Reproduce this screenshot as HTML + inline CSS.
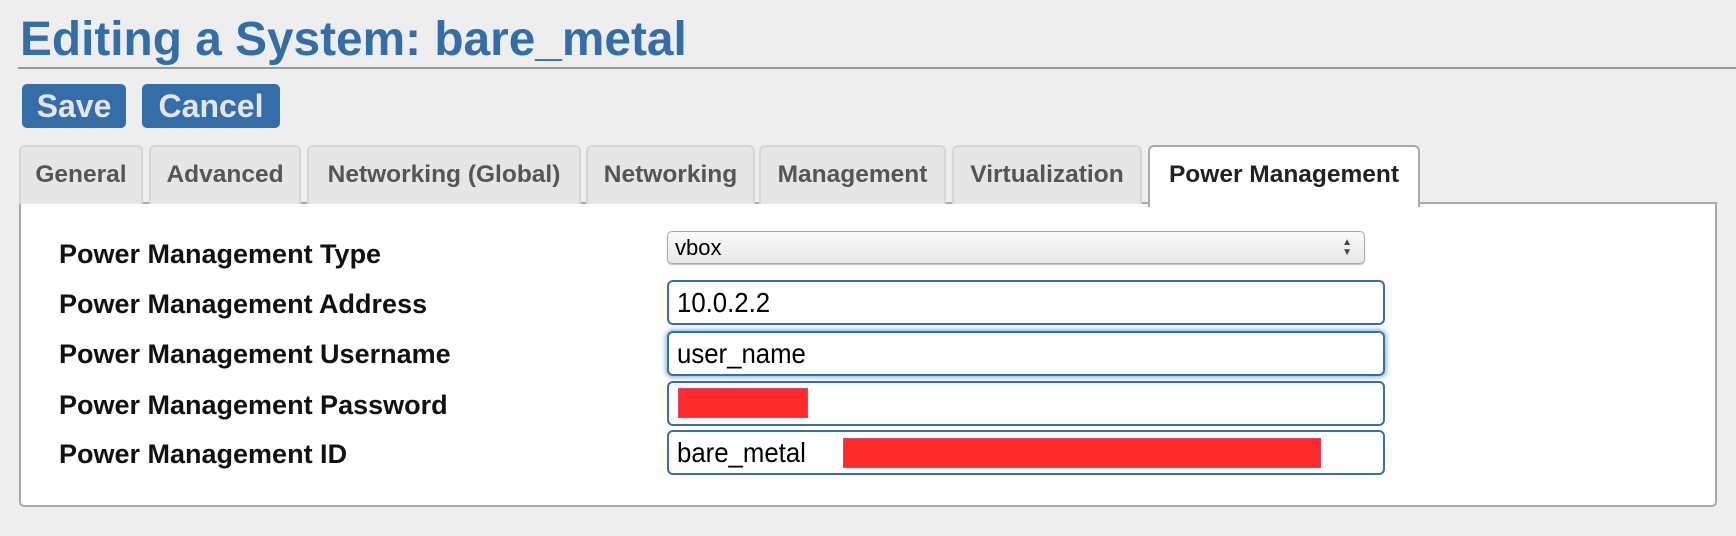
<!DOCTYPE html>
<html><head><meta charset="utf-8"><style>
*{box-sizing:border-box;margin:0;padding:0}
body{width:1736px;height:536px;background:#eeeeee;font-family:"Liberation Sans",Arial,sans-serif;position:relative;overflow:hidden}
.a{position:absolute}
h1{position:absolute;left:20px;top:12px;font-size:47.8px;font-weight:bold;color:#336ea9;white-space:nowrap}
.rule{left:18px;top:67px;width:1718px;height:2px;background:#999}
.btn{background:#336ea9;color:#e4e4e4;font-weight:bold;font-size:32px;border-radius:5px;text-align:center;line-height:44px;top:84px;height:44px}
.tab{top:145px;height:59px;background:#e6e6e6;border:2px solid #d6d6d6;border-bottom:none;border-radius:6px 6px 0 0;color:#555;font-weight:bold;font-size:24.5px;text-align:center;line-height:56px;white-space:nowrap}
.tab.on{background:#fff;color:#222;border-color:#aaa;height:62px;z-index:2}
.panel{left:19px;top:202px;width:1698px;height:305px;background:#fff;border:2px solid #aaa;border-radius:0 0 5px 5px}
.lbl{left:59px;font-weight:bold;font-size:27px;color:#111;white-space:nowrap}
.inp{left:667px;width:718px;height:45px;border:2px solid #3a6ea5;border-radius:6px;background:#fff;font-size:28px;color:#000;padding-left:8px;line-height:41px}
.inp span{display:inline-block;transform:scaleX(0.92);transform-origin:left}
.red{background:#ff2a2a;border:1px solid #e0407a}
</style></head><body>
<h1>Editing a System: bare_metal</h1>
<div class="a rule"></div>
<div class="a btn" style="left:22px;width:104px">Save</div>
<div class="a btn" style="left:142px;width:138px">Cancel</div>
<div class="a panel"></div>
<div class="a tab" style="left:19px;width:124px">General</div>
<div class="a tab" style="left:149px;width:152px">Advanced</div>
<div class="a tab" style="left:307px;width:274px">Networking (Global)</div>
<div class="a tab" style="left:586px;width:169px">Networking</div>
<div class="a tab" style="left:759px;width:187px">Management</div>
<div class="a tab" style="left:952px;width:190px">Virtualization</div>
<div class="a tab on" style="left:1148px;width:272px">Power Management</div>
<div class="a lbl" style="top:239px">Power Management Type</div>
<div class="a lbl" style="top:289px">Power Management Address</div>
<div class="a lbl" style="top:339px">Power Management Username</div>
<div class="a lbl" style="top:390px">Power Management Password</div>
<div class="a lbl" style="top:439px">Power Management ID</div>
<div class="a" style="left:667px;top:231px;width:698px;height:33px;border:1px solid #aaa;border-radius:5px;background:linear-gradient(#fafafa,#e8e8e8);box-shadow:0 1px 1px #bbb;font-size:22px;line-height:31px;padding-left:7px">vbox<span class="a" style="right:12px;top:0;font-size:10px;line-height:10px;color:#444;padding-top:6px">▲<br>▼</span></div>
<div class="a inp" style="top:280px"><span>10.0.2.2</span></div>
<div class="a inp" style="top:331px;box-shadow:0 0 4px 2px #9cc0e6"><span>user_name</span></div>
<div class="a inp" style="top:381px"></div>
<div class="a red" style="left:678px;top:388px;width:130px;height:30px"></div>
<div class="a inp" style="top:430px"><span>bare_metal</span></div>
<div class="a red" style="left:843px;top:438px;width:478px;height:30px"></div>
</body></html>
